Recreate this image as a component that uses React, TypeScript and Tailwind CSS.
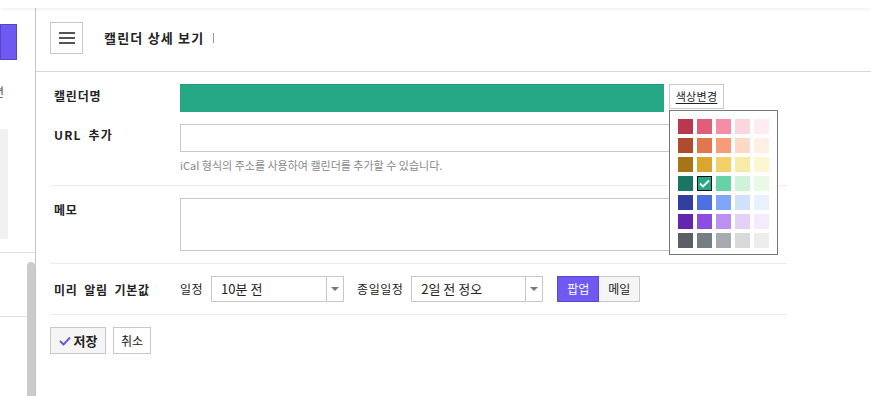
import React from 'react';

const palette: string[][] = [
  ['#b9384e', '#e25d79', '#f58da5', '#fcd6df', '#fdedf1'],
  ['#ae4d2d', '#e2764f', '#f69c79', '#fed9c6', '#fff0e3'],
  ['#a8741a', '#dca52e', '#f3d068', '#f8eaa7', '#fcf7d0'],
  ['#197564', '#26a886', '#66d2a5', '#cef3d9', '#e9f9e6'],
  ['#333fa0', '#4e6fe0', '#7ea7f8', '#d0e1fc', '#e8f2fe'],
  ['#6426b0', '#8c4ee0', '#be8ff3', '#e4d1f7', '#f6eafd'],
  ['#5b5f65', '#767c83', '#a7abaf', '#d7d9da', '#ededed'],
];

const font = { fontFamily: '"Noto Sans CJK KR", "Noto Sans", sans-serif' };

const label = 'w-[130px] pl-[4px] text-[12px] font-bold leading-[16px] tracking-[0.8px] [word-spacing:3px] text-[#222]';

function Select({ value, width }: { value: string; width: string }) {
  return (
    <div className={`flex h-[26px] ${width} border border-[#c8c8c8] bg-white`}>
      <div className="flex-1 pl-[9px] text-[13px] leading-[24px] text-[#222]">{value}</div>
      <div className="flex w-[17px] items-center justify-center border-l border-[#c8c8c8]">
        <div className="h-0 w-0 border-x-[4px] border-t-[4px] border-x-transparent border-t-[#777]" />
      </div>
    </div>
  );
}

export default function App() {
  return (
    <div className="relative flex h-[396px] w-[871px] flex-col overflow-hidden bg-white" style={font}>
      {/* top bar */}
      <div className="relative z-10 h-[8px] bg-white shadow-[0_1px_4px_rgba(0,0,0,0.08)]" />

      <div className="flex flex-1">
        {/* Sidebar */}
        <div className="relative w-[36px] shrink-0 overflow-hidden border-r border-[#c4c4c4]">
          <div className="mt-[16px] h-[36px] w-[17px] border border-[#5545c8] bg-[#6e5af3]" />
          <div className="mt-[25px] -ml-[7px] text-[12px] leading-[14px] text-[#555]">편</div>
          <div className="mt-[30px] h-[110px] w-[8px] bg-[#f1f1f1]" />
          <div className="mt-[13px] border-t border-[#dedede]" />
          <div className="mt-[63px] border-t border-[#e4e4e4]" />
          <div className="absolute left-[27px] top-[254px] h-[140px] w-[8px] rounded-t-[4px] bg-[#cbcbcb]" />
        </div>

        {/* Main */}
        <div className="flex-1">
          {/* Header */}
          <div className="flex h-[64px] items-center border-b border-[#d6d6d6] pb-[3px] pl-[14px]">
            <div className="flex h-[32px] w-[33px] flex-col items-center justify-center gap-[3px] border border-[#c8c8c8]">
              <div className="h-[2px] w-[16px] bg-[#555]" />
              <div className="h-[2px] w-[16px] bg-[#555]" />
              <div className="h-[2px] w-[16px] bg-[#555]" />
            </div>
            <div className="ml-[21px] text-[13px] font-bold tracking-[1.2px] text-[#222]">캘린더 상세 보기</div>
            <div className="ml-[9px] h-[10px] w-px bg-[#999]" />
          </div>

          {/* Form */}
          <div className="ml-[14px] w-[737px]">
            {/* Name */}
            <div className="flex pt-[12px]">
              <div className={`${label} pt-[4px]`}>캘린더명</div>
              <div className="flex gap-[5px]">
                <div className="h-[28px] w-[484px] bg-[#26a886] shadow-[inset_0_1px_0_rgba(0,0,0,0.08)]" />
                <div className="relative">
                  <div className="flex h-[25px] w-[55px] items-center justify-center border border-[#c8c8c8] text-[11px] tracking-[0.3px] text-[#222] underline underline-offset-2">
                    색상변경
                  </div>
                  {/* Palette popup */}
                  <div className="absolute left-0 top-[26px] z-20 border border-[#777] bg-white p-[8px] pb-[6px]">
                    <div className="grid grid-cols-[repeat(5,15px)] gap-[4px]">
                      {palette.flatMap((row, r) =>
                        row.map((c, i) => {
                          const sel = r === 3 && i === 1;
                          return (
                            <div
                              key={`${r}-${i}`}
                              className={`flex h-[15px] w-[15px] items-center justify-center ${sel ? 'border border-[#111]' : ''}`}
                              style={{ backgroundColor: c }}
                            >
                              {sel && (
                                <svg width="11" height="9" viewBox="0 0 11 9">
                                  <path d="M1 4.5 L4 7.5 L10 1.5" fill="none" stroke="#fff" strokeWidth="1.8" />
                                </svg>
                              )}
                            </div>
                          );
                        })
                      )}
                    </div>
                  </div>
                </div>
              </div>
            </div>

            {/* URL */}
            <div className="flex pt-[12px]">
              <div className={`${label} pt-[3px] tracking-[1.2px]`}>URL 추가</div>
              <div>
                <div className="h-[28px] w-[543px] border border-[#c8c8c8]" />
                <div className="mt-[6px] text-[11px] leading-[14px] text-[#888]">iCal 형식의 주소를 사용하여 캘린더를 추가할 수 있습니다.</div>
              </div>
            </div>
            <div className="mt-[13px] border-t border-[#ececec]" />

            {/* Memo */}
            <div className="flex pt-[12px]">
              <div className={`${label} pt-[4px]`}>메모</div>
              <div className="h-[53px] w-[543px] border border-[#c8c8c8]" />
            </div>
            <div className="mt-[12px] border-t border-[#ececec]" />

            {/* Reminder */}
            <div className="flex items-center py-[12px]">
              <div className={`${label} pt-[2px]`}>미리 알림 기본값</div>
              <div className="mr-[8px] text-[12px] tracking-[0.5px] text-[#222]">일정</div>
              <Select value="10분 전" width="w-[133px]" />
              <div className="ml-[13px] mr-[8px] text-[12px] tracking-[0.5px] text-[#222]">종일일정</div>
              <Select value="2일 전 정오" width="w-[132px]" />
              <div className="ml-[14px] flex h-[26px]">
                <div className="flex w-[42px] items-center justify-center border border-[#5848d0] bg-[#6e5af3] text-[12px] text-white">팝업</div>
                <div className="flex w-[41px] items-center justify-center border border-l-0 border-[#c8c8c8] bg-[#f5f5f5] text-[12px] text-[#222]">메일</div>
              </div>
            </div>
            <div className="border-t border-[#ececec]" />

            {/* Buttons */}
            <div className="flex gap-[7px] pt-[12px]">
              <div className="flex h-[27px] w-[56px] items-center justify-center gap-[3px] border border-[#c8c8c8] bg-[#f5f5f5]">
                <svg width="12" height="10" viewBox="0 0 12 10">
                  <path d="M1 5 L4.5 8.5 L11 1.5" fill="none" stroke="#6b5bd6" strokeWidth="2" />
                </svg>
                <span className="text-[13px] font-bold text-[#222]">저장</span>
              </div>
              <div className="flex h-[27px] w-[38px] items-center justify-center border border-[#c8c8c8] bg-white text-[12px] text-[#222]">
                취소
              </div>
            </div>
          </div>
        </div>
      </div>
    </div>
  );
}
